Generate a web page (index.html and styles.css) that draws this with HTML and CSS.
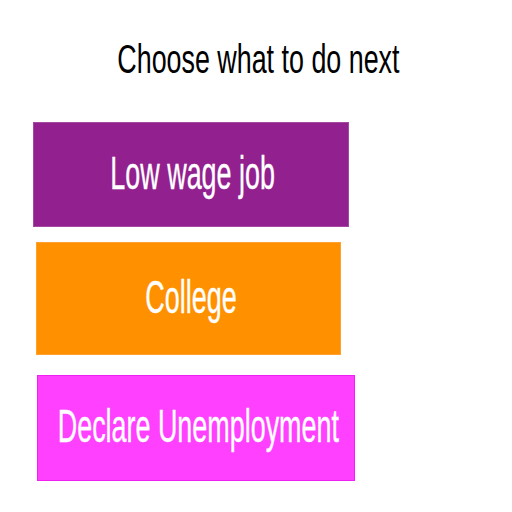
FILE: index.html
```html
<!DOCTYPE html>
<html lang="en">
<head>
  <meta charset="UTF-8">
  <meta name="viewport" content="width=device-width, initial-scale=1.0">
  <title>Choose what to do next</title>
  <link rel="stylesheet" href="styles.css">
</head>
<body>
  <h1 class="title"><span class="squeeze">Choose what to do next</span></h1>

  <div class="choices">
    <button class="choice job"><span class="squeeze">Low wage job</span></button>
    <button class="choice college"><span class="squeeze">College</span></button>
    <button class="choice unemployment"><span class="squeeze">Declare Unemployment</span></button>
  </div>
</body>
</html>
```

FILE: styles.css
```css
body {
  margin: 0;
  font-family: 'Liberation Sans', Arial, sans-serif;
  background: #fff;
}
.title {
  margin: 39px 0 0 0;
  font-size: 41px;
  line-height: 40px;
  font-weight: normal;
  color: #000;
  text-align: center;
  padding-left: 4px;
}
.squeeze {
  display: inline-block;
  transform: scaleX(0.655);
  white-space: nowrap;
}
.choices {
  display: flex;
  flex-direction: column;
  align-items: flex-start;
  margin-top: 43px;
}
.choice {
  display: flex;
  align-items: center;
  justify-content: center;
  box-sizing: border-box;
  padding: 0 0 4px 4px;
  border: 1px solid;
  color: #fff;
  font-family: inherit;
  font-size: 46px;
  cursor: pointer;
}
.choice .squeeze {
  transform: scaleX(0.585);
  -webkit-text-stroke: 0.4px #fff;
}
.job {
  margin-left: 33px;
  width: 316px;
  height: 105px;
  background-color: #93208f;
  border-color: #a34aa0;
}
.college {
  margin-left: 36px;
  margin-top: 15px;
  width: 305px;
  height: 113px;
  background-color: #ff9100;
  border-color: #ffa030;
}
.unemployment {
  margin-left: 37px;
  margin-top: 20px;
  width: 318px;
  height: 106px;
  background-color: #ff40ff;
  border-color: #f020f0;
}
```
